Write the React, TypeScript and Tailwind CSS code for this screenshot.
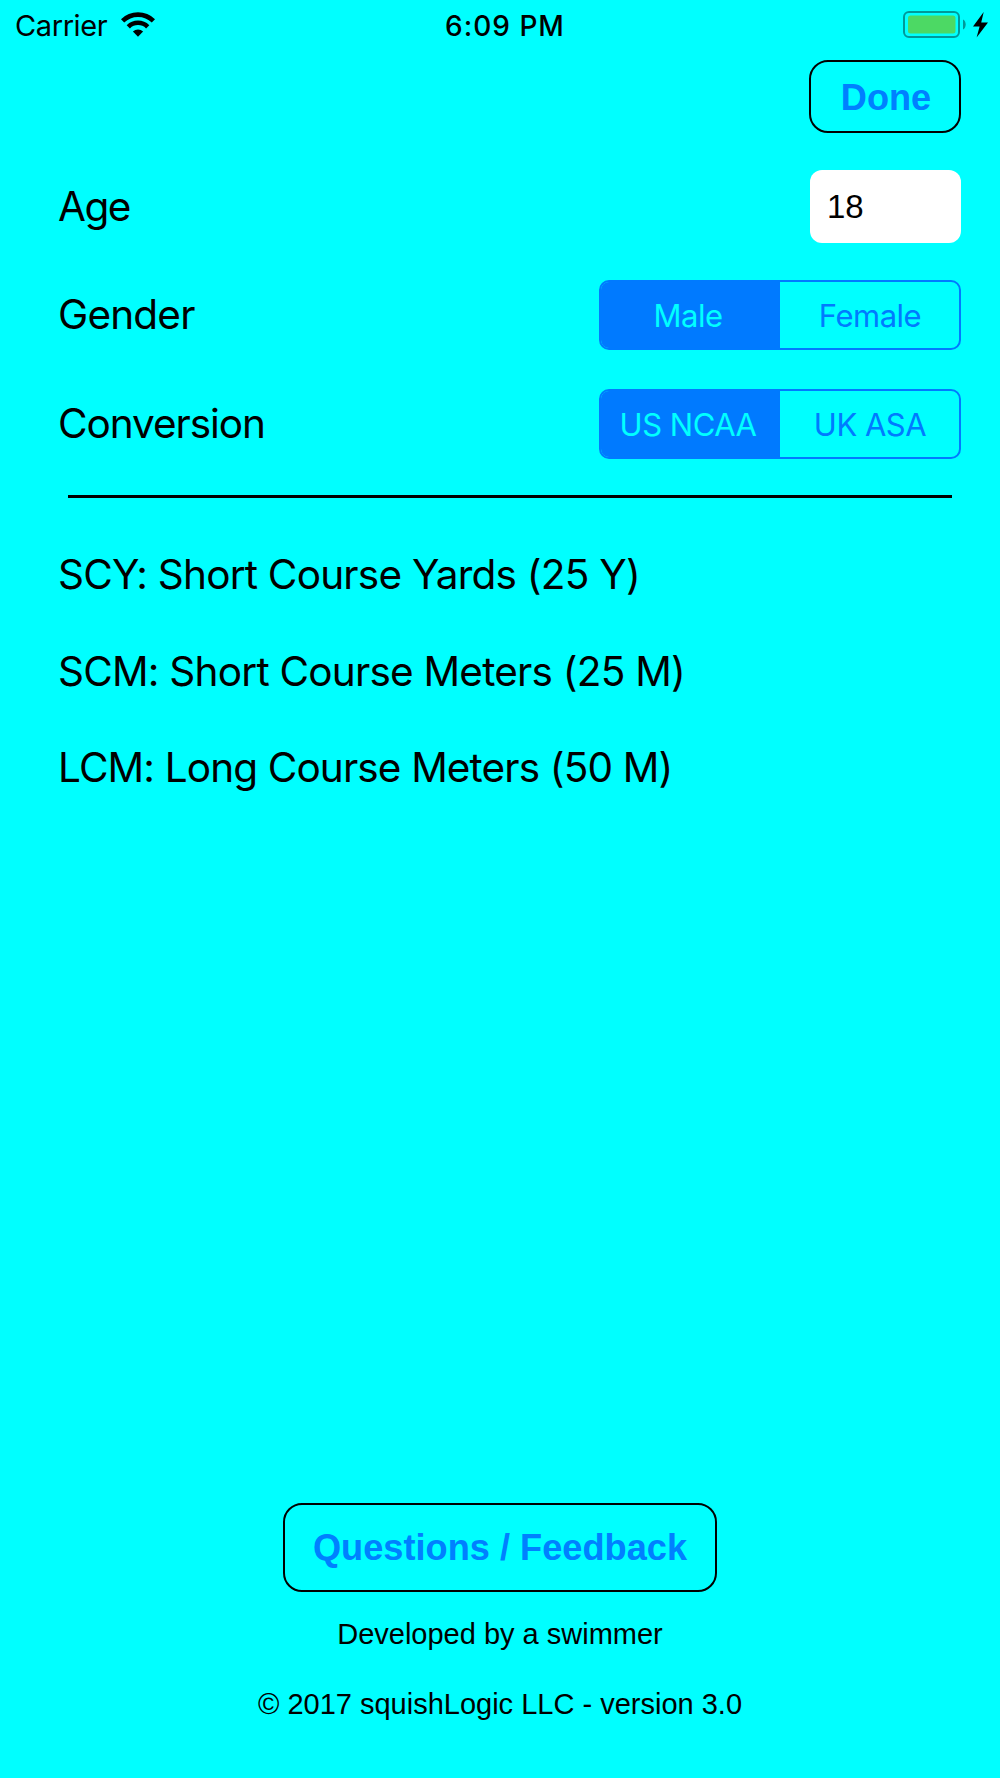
import { clsx } from "clsx";
import { useState } from "react";

type SegmentedControlProps = {
  options: string[];
  defaultValue: string;
};

const courses = [
  "SCY: Short Course Yards (25 Y)",
  "SCM: Short Course Meters (25 M)",
  "LCM: Long Course Meters (50 M)",
];

function SegmentedControl({ options, defaultValue }: SegmentedControlProps) {
  const [value, setValue] = useState(defaultValue);

  return (
    <div className="grid h-[70px] w-[362px] grid-cols-2 overflow-hidden rounded-[10px] border-2 border-[#007aff]">
      {options.map((option) => (
        <button
          key={option}
          onClick={() => setValue(option)}
          className={clsx(
            "text-[31px] leading-none tracking-[-0.5px] whitespace-nowrap",
            option === value
              ? "bg-[#007aff] pr-[5px] text-[#00ffff]"
              : "pl-px text-[#007aff]"
          )}
        >
          {option}
        </button>
      ))}
    </div>
  );
}

function WifiIcon() {
  return (
    <svg className="mb-px h-[25px] w-[34px]" viewBox="0 0 34 25">
      <g fill="none" stroke="#000" strokeWidth="4.6">
        <path d="M1.6 8.9a22 22 0 0 1 30.8 0" />
        <path d="M7.3 14.8a13.8 13.8 0 0 1 19.4 0" />
      </g>
      <path d="M11.9 19.6a7.2 7.2 0 0 1 10.2 0L17 24.7z" />
    </svg>
  );
}

function BatteryIcon() {
  return (
    <svg className="mb-[2px] h-[27px] w-[63px]" viewBox="0 0 63 27">
      <rect
        x="1"
        y="1"
        width="55"
        height="25"
        rx="5"
        fill="none"
        stroke="#009999"
        strokeWidth="2"
      />
      <rect x="5" y="4.5" width="47.5" height="18" rx="2.5" fill="#4cd964" />
      <path d="M60 8.5c3.6 1.4 3.6 8.6 0 10z" fill="#009999" />
    </svg>
  );
}

function StatusBar() {
  return (
    <header className="grid h-[50px] grid-cols-3 items-center pr-3 pl-[15px]">
      <div className="flex items-center gap-[14px]">
        <span className="text-[29px] leading-none tracking-[-0.4px]">
          Carrier
        </span>
        <WifiIcon />
      </div>
      <span className="pt-px pl-[7px] text-center text-[28px] leading-none font-medium tracking-[1px]">
        6:09 PM
      </span>
      <div className="flex items-center justify-end gap-[7px]">
        <BatteryIcon />
        <svg className="mb-px h-[26px] w-[15px]" viewBox="0 0 15 26">
          <path d="M10.7 0 0 14.4h6.6L3.6 25.6 15 10.4H8.2z" />
        </svg>
      </div>
    </header>
  );
}

export default function App() {
  const [age, setAge] = useState("18");

  return (
    <div className="flex h-[1778px] w-[1000px] flex-col bg-[#00ffff] font-['Inter',sans-serif] text-black">
      <StatusBar />

      <main className="flex flex-1 flex-col pt-[10px] pr-[39px] pl-[58px] text-[40.5px] leading-none">
        <button className="h-[73px] w-[152px] self-end rounded-[19px] border-2 border-black pt-[3px] pl-[2px] font-['Liberation_Sans',sans-serif] text-[36.2px] leading-none font-bold text-[#0080ff]">
          Done
        </button>

        <div className="mt-[37px] flex h-[73px] items-center justify-between">
          <label htmlFor="age" className="pt-[2px] tracking-[-1.5px]">
            Age
          </label>
          <input
            id="age"
            value={age}
            onChange={(e) => setAge(e.target.value)}
            className="h-[73px] w-[151px] rounded-[12px] bg-white px-[17px] font-['Liberation_Sans',sans-serif] text-[33px]"
          />
        </div>

        <div className="mt-[37px] flex items-center justify-between">
          <span className="tracking-[-0.8px]">Gender</span>
          <SegmentedControl options={["Male", "Female"]} defaultValue="Male" />
        </div>

        <div className="mt-[39px] flex items-center justify-between">
          <span className="tracking-[-1.05px]">Conversion</span>
          <SegmentedControl
            options={["US NCAA", "UK ASA"]}
            defaultValue="US NCAA"
          />
        </div>

        <hr className="mt-9 mr-[9px] ml-[10px] border-t-[3px] border-black" />

        <ul className="mt-[57px] flex flex-col gap-14 tracking-[-0.77px]">
          {courses.map((course) => (
            <li key={course} className="last:tracking-[-0.86px]">
              {course}
            </li>
          ))}
        </ul>
      </main>

      <footer className="flex flex-col items-center pb-[59px] font-['Liberation_Sans',sans-serif] text-[29px] leading-[30px]">
        <button className="h-[89px] w-[434px] rounded-[19px] border-2 border-black text-[36.2px] font-bold text-[#0080ff]">
          Questions / Feedback
        </button>
        <p className="mt-[27px]">Developed by a swimmer</p>
        <p className="mt-10">© 2017 squishLogic LLC - version 3.0</p>
      </footer>
    </div>
  );
}
